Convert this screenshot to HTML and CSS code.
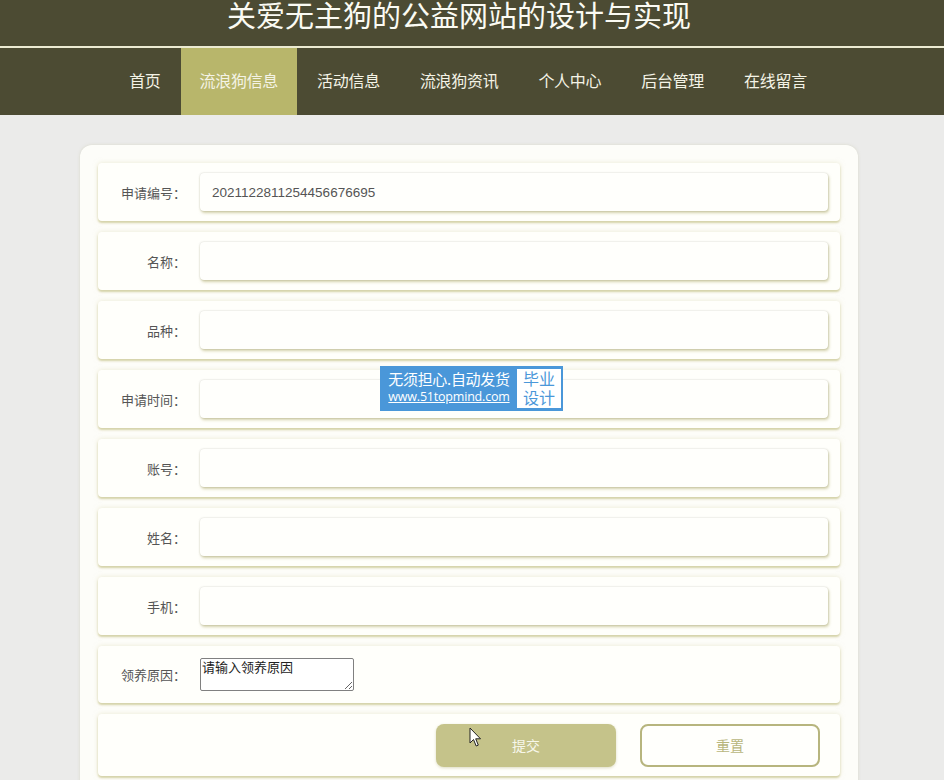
FILE: index.html
```html
<!DOCTYPE html>
<html lang="zh-CN">
<head>
<meta charset="utf-8">
<title>关爱无主狗的公益网站的设计与实现</title>
<link rel="stylesheet" href="styles.css">
</head>
<body>
<header class="header">
  <div class="title">关爱无主狗的公益网站的设计与实现</div>
  <nav class="nav">
    <a class="nav-item">首页</a>
    <a class="nav-item active">流浪狗信息</a>
    <a class="nav-item">活动信息</a>
    <a class="nav-item">流浪狗资讯</a>
    <a class="nav-item">个人中心</a>
    <a class="nav-item">后台管理</a>
    <a class="nav-item">在线留言</a>
  </nav>
</header>
<main class="main">
  <form class="card">
    <div class="row"><label class="label">申请编号：</label><input class="input" value="2021122811254456676695" readonly></div>
    <div class="row"><label class="label">名称：</label><input class="input"></div>
    <div class="row"><label class="label">品种：</label><input class="input"></div>
    <div class="row"><label class="label">申请时间：</label><input class="input"></div>
    <div class="row"><label class="label">账号：</label><input class="input"></div>
    <div class="row"><label class="label">姓名：</label><input class="input"></div>
    <div class="row"><label class="label">手机：</label><input class="input"></div>
    <div class="row row-area"><label class="label">领养原因：</label><textarea class="area">请输入领养原因</textarea></div>
    <div class="row row-btns"><button type="button" class="btn btn-submit">提交</button><button type="button" class="btn btn-reset">重置</button></div>
  </form>
</main>
<div class="watermark">
  <div class="wm-left"><span class="wm-top">无须担心.自动发货</span><span class="wm-url">www.51topmind.com</span></div>
  <div class="wm-right">毕业<br>设计</div>
</div>
<svg class="cursor" width="13" height="21" viewBox="0 0 13 21"><path d="M1 1 L1 16 L4.5 12.5 L7.2 19 L9.3 18.1 L6.7 11.8 L11.5 11.8 Z" fill="#fff" stroke="#222" stroke-width="1" stroke-linejoin="round"/></svg>
</body>
</html>
```
FILE: styles.css
```css
html, body {
  margin: 0;
  padding: 0;
}
body {
  background: #ebebea;
  font-family: "Liberation Sans", "Noto Sans CJK SC", sans-serif;
  width: 944px;
  height: 780px;
  overflow: hidden;
  position: relative;
}
.header {
  background: #4c4b33;
}
.title {
  height: 46px;
  line-height: 28px;
  text-align: center;
  color: #fbfbf3;
  font-family: "Noto Sans CJK SC", sans-serif;
  font-size: 29px;
  padding-right: 26px;
  border-bottom: 2px solid #ecebd2;
}
.nav {
  display: flex;
  justify-content: center;
  height: 67px;
  padding-right: 8px;
}
.nav-item {
  display: flex;
  align-items: center;
  padding: 0 20px 4px;
  color: #f4f3e6;
  font-family: "Noto Sans CJK SC", sans-serif;
  font-size: 16px;
  letter-spacing: -0.3px;
  cursor: pointer;
}
.nav-item.active {
  background: #b8b66b;
  padding: 0 19px 4px;
}
.main {
  padding: 30px 0 0 80px;
}
.card {
  width: 742px;
  background: #fdfdf9;
  border-radius: 12px;
  padding: 18px;
  box-shadow: 0 0 3px rgba(200, 200, 170, 0.5);
  display: flex;
  flex-direction: column;
  gap: 11px;
}
.row {
  height: 58px;
  background: #fffffb;
  border-radius: 4px;
  display: flex;
  align-items: center;
  box-shadow: 0 2px 2px rgba(196, 194, 136, 0.65), 0 0 5px rgba(220, 218, 180, 0.55);
}
.label {
  width: 88px;
  text-align: right;
  font-family: "Noto Sans CJK SC", sans-serif;
  font-size: 13px;
  color: #555;
  margin-right: 14px;
  flex: none;
}
.input {
  width: 628px;
  height: 38px;
  box-sizing: border-box;
  border: none;
  outline: none;
  border-radius: 4px;
  background: #fffffc;
  box-shadow: 0 0 2px rgba(0, 0, 0, 0.18), 1px 2px 3px rgba(190, 188, 130, 0.65);
  padding: 0 12px;
  font-family: "Liberation Sans", "Noto Sans CJK SC", sans-serif;
  font-size: 13.5px;
  color: #555;
}
.row-area {
  height: 57px;
}
.area {
  width: 154px;
  height: 33px;
  box-sizing: border-box;
  border: 1px solid #808080;
  border-radius: 2px;
  padding: 0 1px;
  margin: 0;
  font-family: "Noto Sans CJK SC", sans-serif;
  font-size: 13px;
  line-height: 16px;
  color: #222;
  background: #fff;
  resize: both;
}
.row-btns {
  height: 62px;
  justify-content: flex-end;
  gap: 24px;
  padding-right: 20px;
}
.btn {
  width: 180px;
  height: 43px;
  border-radius: 8px;
  font-family: "Noto Sans CJK SC", sans-serif;
  font-size: 14px;
  cursor: pointer;
  box-sizing: border-box;
}
.btn-submit {
  background: #c5c38a;
  color: #f7f7ea;
  border: none;
  box-shadow: 0 1px 3px rgba(170, 168, 110, 0.4);
}
.btn-reset {
  background: #fffffc;
  color: #b8b67c;
  border: 2px solid #b7b57e;
}
.watermark {
  position: absolute;
  left: 380px;
  top: 366px;
  width: 183px;
  height: 45px;
  box-sizing: border-box;
  background: #4a97d9;
  border: 2px solid #4a97d9;
  display: flex;
}
.wm-left {
  width: 134px;
  display: flex;
  flex-direction: column;
  align-items: center;
  color: #fff;
  line-height: 1;
}
.wm-top {
  font-family: "Noto Sans CJK SC", sans-serif;
  font-size: 15px;
  margin-top: 3px;
  letter-spacing: -0.3px;
}
.wm-url {
  font-family: "Open Sans", "Noto Sans", sans-serif;
  font-size: 12.5px;
  margin-top: 5px;
  text-decoration: underline;
  letter-spacing: -0.2px;
}
.wm-right {
  flex: 1;
  background: #fff;
  color: #4a97d9;
  font-family: "Noto Sans CJK SC", sans-serif;
  font-size: 16px;
  line-height: 19px;
  text-align: center;
  margin: 1px 0 1px 1px;
}
.cursor {
  position: absolute;
  left: 469px;
  top: 727px;
}
```
